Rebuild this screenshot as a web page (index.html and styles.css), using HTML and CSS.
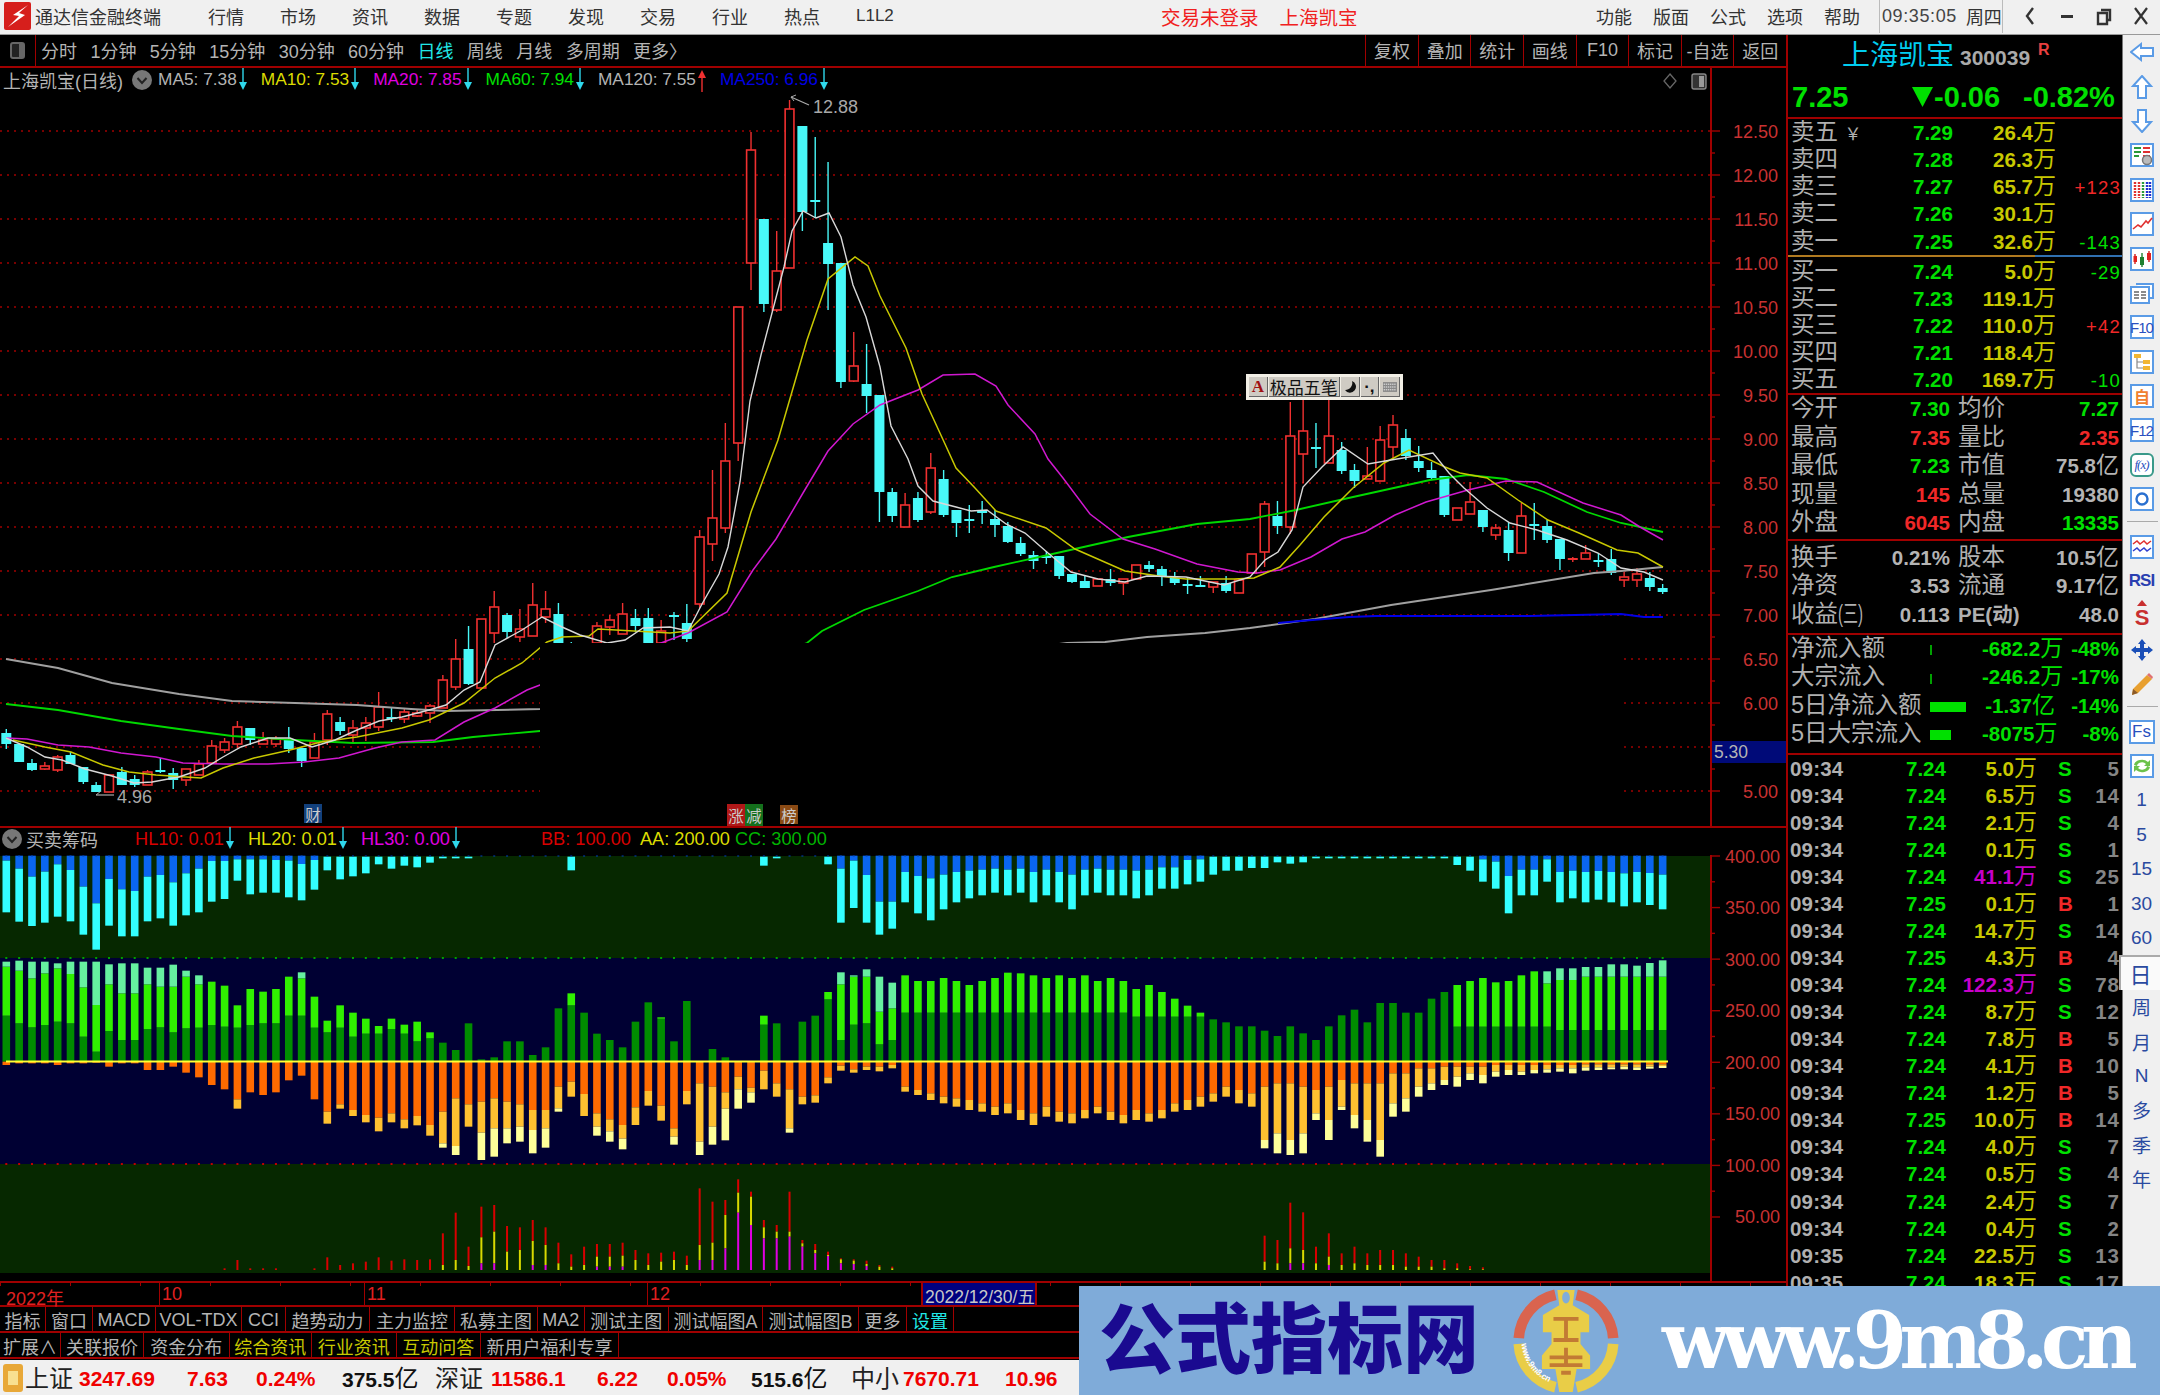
FILE: index.html
```html
<!DOCTYPE html>
<html lang="zh-CN">
<head>
    <meta charset="UTF-8">
    <title>通达信金融终端</title>
    <link rel="stylesheet" href="styles.css">
</head>
<body>
    <svg width="0" height="0" class="defs">
        <symbol id="arrow-down" viewBox="0 0 10 24"><path d="M5 0V16" stroke="#2fd8ec" stroke-width="1.4"/><path d="M1 14H9L5 22Z" fill="#2fd8ec"/></symbol>
        <symbol id="arrow-up" viewBox="0 0 10 24"><path d="M5 8V24" stroke="#f03030" stroke-width="1.4"/><path d="M1 10H9L5 2Z" fill="#f03030"/></symbol>
        <symbol id="fold" viewBox="0 0 20 20"><circle cx="10" cy="10" r="10" fill="#777"/><path d="M5.5 8L10 13L14.5 8" fill="none" stroke="#222" stroke-width="2"/></symbol>
    </svg>

    <header class="titlebar">
        <svg class="app-logo" viewBox="0 0 27 28"><rect width="27" height="28" rx="2" fill="#d61f1c"/><path d="M24 3L9 13L15 14L4 25L21 13L15 11Z" fill="#fff"/></svg>
        <span class="app-name">通达信金融终端</span>
        <nav class="menu">
            <span>行情</span><span>市场</span><span>资讯</span><span>数据</span><span>专题</span><span>发现</span><span>交易</span><span>行业</span><span>热点</span><span>L1L2</span>
        </nav>
        <div class="title-notice"><span>交易未登录</span><span>上海凯宝</span></div>
        <nav class="menu-right"><span>功能</span><span>版面</span><span>公式</span><span>选项</span><span>帮助</span></nav>
        <div class="clock"><span>09:35:05</span><span>周四</span></div>
        <div class="win-btns">
            <svg viewBox="0 0 16 22"><path d="M11 3L5 11L11 19" fill="none" stroke="#333" stroke-width="2.4"/></svg>
            <svg viewBox="0 0 16 22"><rect x="2" y="10" width="12" height="3" fill="#333"/></svg>
            <svg viewBox="0 0 16 22"><path d="M5 5H14V15H11M2 8H11V19H2Z" fill="none" stroke="#333" stroke-width="2.4"/></svg>
            <svg viewBox="0 0 16 22"><path d="M2 3L14 19M14 3L2 19" stroke="#333" stroke-width="2.2"/></svg>
        </div>
    </header>

    <div class="workspace">
        <main class="main">
            <div class="period-bar">
                <span class="panel-toggle"><i></i></span>
                <div class="periods">
                    <span>分时</span><span>1分钟</span><span>5分钟</span><span>15分钟</span><span>30分钟</span><span>60分钟</span><span class="on">日线</span><span>周线</span><span>月线</span><span>多周期</span><span>更多〉</span>
                </div>
                <div class="tools">
                    <span>复权</span><span>叠加</span><span>统计</span><span>画线</span><span>F10</span><span>标记</span><span>-自选</span><span>返回</span>
                </div>
            </div>

            <section class="price-pane">
                <svg id="price-chart" class="pane-svg" viewBox="0 68 1786 758"></svg>
                <div class="legend">
                    <span class="stock-title">上海凯宝(日线)</span>
                    <svg class="fold"><use href="#fold"/></svg>
                    <span class="ma c-gray">MA5: 7.38</span><svg class="arr"><use href="#arrow-down"/></svg>
                    <span class="ma c-yellow">MA10: 7.53</span><svg class="arr"><use href="#arrow-down"/></svg>
                    <span class="ma c-magenta">MA20: 7.85</span><svg class="arr"><use href="#arrow-down"/></svg>
                    <span class="ma c-green">MA60: 7.94</span><svg class="arr"><use href="#arrow-down"/></svg>
                    <span class="ma c-gray">MA120: 7.55</span><svg class="arr"><use href="#arrow-up"/></svg>
                    <span class="ma c-blue">MA250: 6.96</span><svg class="arr"><use href="#arrow-down"/></svg>
                </div>
                <svg class="pane-icons" viewBox="0 0 44 24"><path d="M7 5L13 12L7 19L1 12Z" fill="none" stroke="#666" stroke-width="1.3"/><rect x="29" y="5" width="14" height="15" rx="2" fill="#333" stroke="#888" stroke-width="1.4"/><rect x="36" y="7" width="5" height="11" fill="#999"/></svg>

                <div class="ime">
                    <b class="ime-a">A</b><span class="ime-name">极品五笔</span>
                    <span class="ime-key">
                        <svg viewBox="0 0 14 14"><path d="M9 1A6 6 0 1 1 2 10A7 7 0 0 0 9 1Z" fill="#111"/></svg>
                    </span>
                    <span class="ime-key ime-dot">·,</span>
                    <span class="ime-key">
                        <svg viewBox="0 0 20 14"><rect width="20" height="14" fill="#888"/><path d="M1 3H19M1 7H19M1 11H19" stroke="#eee" stroke-width="1.4" stroke-dasharray="2 1"/></svg>
                    </span>
                </div>

                <span class="pin pin-cai">财</span>
                <span class="pin pin-zhang"><i>涨</i><i>减</i></span>
                <span class="pin pin-bang">榜</span>
                <span class="cursor-price">5.30</span>
            </section>

            <div class="ind-head">
                <svg class="fold"><use href="#fold"/></svg>
                <span class="ind-name">买卖筹码</span>
                <span class="ma c-red">HL10: 0.01</span><svg class="arr"><use href="#arrow-down"/></svg>
                <span class="ma c-yellow">HL20: 0.01</span><svg class="arr"><use href="#arrow-down"/></svg>
                <span class="ma c-magenta">HL30: 0.00</span><svg class="arr"><use href="#arrow-down"/></svg>
                <span class="ma c-red bb">BB: 100.00</span>
                <span class="ma c-yellow aa">AA: 200.00</span>
                <span class="ma c-green2">CC: 300.00</span>
            </div>

            <section class="ind-pane">
                <svg id="ind-chart" class="pane-svg" viewBox="0 855 1786 426"></svg>
            </section>

            <div class="date-axis">
                <span class="month m-year">2022年</span>
                <span class="month m-oct">10</span>
                <span class="month m-nov">11</span>
                <span class="month m-dec">12</span>
                <span class="date-box">2022/12/30/五</span>
            </div>
            <div class="tabs tabs-a">
                <span>指标</span><span>窗口</span><span>MACD</span><span>VOL-TDX</span><span>CCI</span><span>趋势动力</span><span>主力监控</span><span>私募主图</span><span>MA2</span><span>测试主图</span><span>测试幅图A</span><span>测试幅图B</span><span>更多</span><span class="t-cyan">设置</span>
            </div>
            <div class="tabs tabs-b">
                <span>扩展∧</span><span>关联报价</span><span>资金分布</span><span class="t-yellow">综合资讯</span><span class="t-yellow">行业资讯</span><span class="t-yellow">互动问答</span><span>新用户福利专享</span>
            </div>
        </main>

        <aside class="quote">
            <div class="q-name">
                <span class="q-title">上海凯宝</span><span class="q-code">300039</span><sup class="q-r">R</sup>
            </div>
            <div class="q-price">
                <span class="q-last">7.25</span>
                <span class="q-chg"><svg viewBox="0 0 21 20"><path d="M0 0H21L10.5 20Z" fill="#00e000"/></svg>-0.06</span>
                <span class="q-pct">-0.82%</span>
            </div>

            <div class="book sec asks">
                <div class="book-row"><span class="lab">卖五 <i class="yen">￥</i></span><b class="g">7.29</b><b class="vol">26.4<i>万</i></b><span class="dl"></span></div>
                <div class="book-row"><span class="lab">卖四</span><b class="g">7.28</b><b class="vol">26.3<i>万</i></b><span class="dl"></span></div>
                <div class="book-row"><span class="lab">卖三</span><b class="g">7.27</b><b class="vol">65.7<i>万</i></b><span class="dl r">+123</span></div>
                <div class="book-row"><span class="lab">卖二</span><b class="g">7.26</b><b class="vol">30.1<i>万</i></b><span class="dl"></span></div>
                <div class="book-row"><span class="lab">卖一</span><b class="g">7.25</b><b class="vol">32.6<i>万</i></b><span class="dl g">-143</span></div>
            </div>
            <div class="book sec bids">
                <div class="book-row"><span class="lab">买一</span><b class="g">7.24</b><b class="vol">5.0<i>万</i></b><span class="dl g">-29</span></div>
                <div class="book-row"><span class="lab">买二</span><b class="g">7.23</b><b class="vol">119.1<i>万</i></b><span class="dl"></span></div>
                <div class="book-row"><span class="lab">买三</span><b class="g">7.22</b><b class="vol">110.0<i>万</i></b><span class="dl r">+42</span></div>
                <div class="book-row"><span class="lab">买四</span><b class="g">7.21</b><b class="vol">118.4<i>万</i></b><span class="dl"></span></div>
                <div class="book-row"><span class="lab">买五</span><b class="g">7.20</b><b class="vol">169.7<i>万</i></b><span class="dl g">-10</span></div>
            </div>

            <div class="stats sec">
                <div class="stat-row"><span class="lab">今开</span><b class="g">7.30</b><span class="lab">均价</span><b class="g">7.27</b></div>
                <div class="stat-row"><span class="lab">最高</span><b class="r">7.35</b><span class="lab">量比</span><b class="r">2.35</b></div>
                <div class="stat-row"><span class="lab">最低</span><b class="g">7.23</b><span class="lab">市值</span><b class="w">75.8<i>亿</i></b></div>
                <div class="stat-row"><span class="lab">现量</span><b class="r">145</b><span class="lab">总量</span><b class="w">19380</b></div>
                <div class="stat-row"><span class="lab">外盘</span><b class="r">6045</b><span class="lab">内盘</span><b class="g">13335</b></div>
            </div>
            <div class="stats sec stats-b">
                <div class="stat-row"><span class="lab">换手</span><b class="w">0.21%</b><span class="lab">股本</span><b class="w">10.5<i>亿</i></b></div>
                <div class="stat-row"><span class="lab">净资</span><b class="w">3.53</b><span class="lab">流通</span><b class="w">9.17<i>亿</i></b></div>
                <div class="stat-row"><span class="lab lab-q">收益<i>(三)</i></span><b class="w">0.113</b><span class="lab pe">PE(动)</span><b class="w">48.0</b></div>
            </div>

            <div class="flows sec">
                <div class="flow-row"><span class="lab">净流入额</span><span class="bar bar-tiny"></span><b class="g">-682.2<i>万</i></b><b class="g">-48%</b></div>
                <div class="flow-row"><span class="lab">大宗流入</span><span class="bar bar-tiny"></span><b class="g">-246.2<i>万</i></b><b class="g">-17%</b></div>
                <div class="flow-row"><span class="lab">5日净流入额</span><span class="bar bar-long"></span><b class="g">-1.37<i>亿</i></b><b class="g">-14%</b></div>
                <div class="flow-row"><span class="lab">5日大宗流入</span><span class="bar bar-mid"></span><b class="g">-8075<i>万</i></b><b class="g">-8%</b></div>
            </div>

            <div class="ticks">
                <div class="tick"><b class="t">09:34</b><b class="g">7.24</b><b class="vol">5.0<i>万</i></b><b class="g">S</b><b class="n">5</b></div>
                <div class="tick"><b class="t">09:34</b><b class="g">7.24</b><b class="vol">6.5<i>万</i></b><b class="g">S</b><b class="n">14</b></div>
                <div class="tick"><b class="t">09:34</b><b class="g">7.24</b><b class="vol">2.1<i>万</i></b><b class="g">S</b><b class="n">4</b></div>
                <div class="tick"><b class="t">09:34</b><b class="g">7.24</b><b class="vol">0.1<i>万</i></b><b class="g">S</b><b class="n">1</b></div>
                <div class="tick"><b class="t">09:34</b><b class="g">7.24</b><b class="vol big">41.1<i>万</i></b><b class="g">S</b><b class="n">25</b></div>
                <div class="tick"><b class="t">09:34</b><b class="g">7.25</b><b class="vol">0.1<i>万</i></b><b class="r">B</b><b class="n">1</b></div>
                <div class="tick"><b class="t">09:34</b><b class="g">7.24</b><b class="vol">14.7<i>万</i></b><b class="g">S</b><b class="n">14</b></div>
                <div class="tick"><b class="t">09:34</b><b class="g">7.25</b><b class="vol">4.3<i>万</i></b><b class="r">B</b><b class="n">4</b></div>
                <div class="tick"><b class="t">09:34</b><b class="g">7.24</b><b class="vol big">122.3<i>万</i></b><b class="g">S</b><b class="n">78</b></div>
                <div class="tick"><b class="t">09:34</b><b class="g">7.24</b><b class="vol">8.7<i>万</i></b><b class="g">S</b><b class="n">12</b></div>
                <div class="tick"><b class="t">09:34</b><b class="g">7.24</b><b class="vol">7.8<i>万</i></b><b class="r">B</b><b class="n">5</b></div>
                <div class="tick"><b class="t">09:34</b><b class="g">7.24</b><b class="vol">4.1<i>万</i></b><b class="r">B</b><b class="n">10</b></div>
                <div class="tick"><b class="t">09:34</b><b class="g">7.24</b><b class="vol">1.2<i>万</i></b><b class="r">B</b><b class="n">5</b></div>
                <div class="tick"><b class="t">09:34</b><b class="g">7.25</b><b class="vol">10.0<i>万</i></b><b class="r">B</b><b class="n">14</b></div>
                <div class="tick"><b class="t">09:34</b><b class="g">7.24</b><b class="vol">4.0<i>万</i></b><b class="g">S</b><b class="n">7</b></div>
                <div class="tick"><b class="t">09:34</b><b class="g">7.24</b><b class="vol">0.5<i>万</i></b><b class="g">S</b><b class="n">4</b></div>
                <div class="tick"><b class="t">09:34</b><b class="g">7.24</b><b class="vol">2.4<i>万</i></b><b class="g">S</b><b class="n">7</b></div>
                <div class="tick"><b class="t">09:34</b><b class="g">7.24</b><b class="vol">0.4<i>万</i></b><b class="g">S</b><b class="n">2</b></div>
                <div class="tick"><b class="t">09:35</b><b class="g">7.24</b><b class="vol">22.5<i>万</i></b><b class="g">S</b><b class="n">13</b></div>
                <div class="tick"><b class="t">09:35</b><b class="g">7.24</b><b class="vol">18.3<i>万</i></b><b class="g">S</b><b class="n">17</b></div>
            </div>
        </aside>

        <aside class="sidebar">
            <div class="side-btn"><svg viewBox="0 0 24 24"><path d="M1 12L11 4V8H23V16H11V20Z" fill="#fff" stroke="#5a9be6" stroke-width="2"/></svg></div>
            <div class="side-btn"><svg viewBox="0 0 24 24"><path d="M12 1L21 11H16V23H8V11H3Z" fill="#fff" stroke="#5a9be6" stroke-width="2"/></svg></div>
            <div class="side-btn"><svg viewBox="0 0 24 24"><path d="M12 23L21 13H16V1H8V13H3Z" fill="#fff" stroke="#5a9be6" stroke-width="2"/></svg></div>
            <div class="side-btn"><svg viewBox="0 0 24 24"><rect x="1" y="1" width="22" height="22" fill="#fff" stroke="#5a9be6" stroke-width="2"/><path d="M4 5H11M4 9H11M4 13H9" stroke="#2a9a3a" stroke-width="2"/><path d="M13 5H20M13 9H20M13 13H20" stroke="#e03030" stroke-width="2"/><circle cx="17" cy="17" r="4.5" fill="#bbb" stroke="#777" stroke-width="1.5"/></svg></div>
            <div class="side-btn"><svg viewBox="0 0 24 24"><rect x="1" y="1" width="22" height="22" fill="#fff" stroke="#5a9be6" stroke-width="2"/><path d="M5 4V20M9 4V20" stroke="#e03030" stroke-width="2.4" stroke-dasharray="2 1"/><path d="M13 4V20" stroke="#2a9a3a" stroke-width="2.4" stroke-dasharray="2 1"/><path d="M17 4V20M20 4V20" stroke="#2030d0" stroke-width="2.4" stroke-dasharray="2 1"/></svg></div>
            <div class="side-btn"><svg viewBox="0 0 24 24"><rect x="1" y="1" width="22" height="22" fill="#fff" stroke="#5a9be6" stroke-width="2"/><path d="M3 17L8 13L11 15L16 9L18 11L22 6" fill="none" stroke="#e03030" stroke-width="1.6"/></svg></div>
            <div class="side-btn"><svg viewBox="0 0 24 24"><rect x="1" y="1" width="22" height="22" fill="#fff" stroke="#5a9be6" stroke-width="2"/><path d="M5 7V17M19 4V15" stroke="#d02020" stroke-width="1.4"/><path d="M12 6V20" stroke="#208030" stroke-width="1.4"/><rect x="3.5" y="9" width="3.5" height="6" fill="#e02020"/><rect x="10" y="10" width="4" height="8" fill="#208030"/><rect x="17" y="6" width="4" height="7" fill="#e02020"/></svg></div>
            <div class="side-btn"><svg viewBox="0 0 24 24"><path d="M6 3H23V17H19" fill="#fff" stroke="#5a9be6" stroke-width="2"/><rect x="1" y="6" width="18" height="16" fill="#fff" stroke="#5a9be6" stroke-width="2"/><path d="M4 11H9M11 11H16M4 14H9M11 14H16M4 17H9M11 17H16" stroke="#666" stroke-width="1.4"/></svg></div>
            <div class="side-btn"><span class="box-txt">F10</span></div>
            <div class="side-btn"><svg viewBox="0 0 24 24"><rect x="1" y="1" width="22" height="22" fill="#fff" stroke="#5a9be6" stroke-width="2"/><path d="M7 7V18H13M7 12H13" fill="none" stroke="#888" stroke-width="1.2"/><rect x="4" y="4" width="7" height="4" fill="#f2b632"/><rect x="13" y="10" width="7" height="4" fill="#f2b632"/><rect x="13" y="16" width="7" height="4" fill="#f2b632"/></svg></div>
            <div class="side-btn"><span class="box-txt box-zi">自</span></div>
            <div class="side-btn"><span class="box-txt">F12</span></div>
            <div class="side-btn"><span class="box-txt box-fx">f(x)</span></div>
            <div class="side-btn"><svg viewBox="0 0 24 24"><rect x="1" y="1" width="22" height="22" fill="#fff" stroke="#5a9be6" stroke-width="2"/><circle cx="12" cy="12" r="5.5" fill="none" stroke="#2a70d0" stroke-width="2.4"/></svg></div>
            <div class="side-sep sep-a"></div>
            <div class="side-btn"><svg viewBox="0 0 24 24"><rect x="1" y="1" width="22" height="22" fill="#fff" stroke="#5a9be6" stroke-width="2"/><path d="M3 9L7 6L10 9L14 6L17 9L21 6" fill="none" stroke="#e03030" stroke-width="1.5"/><path d="M3 16L7 13L10 16L14 13L17 16L21 13" fill="none" stroke="#3040d0" stroke-width="1.5"/></svg></div>
            <div class="side-btn"><span class="rsi">RSI</span></div>
            <div class="side-btn"><svg class="dollar-ico" viewBox="0 0 24 30"><path d="M12 0L17 6H7Z" fill="#c83030"/><text x="12" y="25" class="dollar">S</text></svg></div>
            <div class="side-btn"><svg viewBox="0 0 24 24"><path d="M12 1L16 6H14V10H18V8L23 12L18 16V14H14V18H16L12 23L8 18H10V14H6V16L1 12L6 8V10H10V6H8Z" fill="#1a4fb8"/></svg></div>
            <div class="side-btn"><svg viewBox="0 0 24 24"><path d="M3 17L17 3L22 7L8 21L2 23Z" fill="#e8a030"/><path d="M17 3L19 1L23 5L22 7Z" fill="#e07070"/><path d="M3 17L8 21L2 23Z" fill="#8a5a2a"/></svg></div>
            <div class="side-sep sep-b"></div>
            <div class="side-btn"><span class="box-txt box-fs">Fs</span></div>
            <div class="side-btn"><svg viewBox="0 0 24 24"><rect x="1" y="1" width="22" height="22" fill="#fff" stroke="#5a9be6" stroke-width="2"/><path d="M4 11A8 6 0 0 1 18 8L20 6V12H14L16 10A5 4 0 0 0 7 12Z" fill="#6cc24a"/><path d="M20 13A8 6 0 0 1 6 16L4 18V12H10L8 14A5 4 0 0 0 17 12Z" fill="#6cc24a"/></svg></div>
            <div class="side-btn period">1</div>
            <div class="side-btn period">5</div>
            <div class="side-btn period">15</div>
            <div class="side-btn period">30</div>
            <div class="side-btn period">60</div>
            <div class="side-btn period period-on">日</div>
            <div class="side-btn period">周</div>
            <div class="side-btn period">月</div>
            <div class="side-btn period">N</div>
            <div class="side-btn period">多</div>
            <div class="side-btn period">季</div>
            <div class="side-btn period">年</div>
        </aside>
    </div>

    <footer class="statusbar">
        <svg class="st-icon" viewBox="0 0 20 28"><rect width="20" height="28" rx="3" fill="#e8a838"/><rect x="5" y="7" width="10" height="14" fill="#f8e090"/></svg>
        <span class="st-name n1">上证</span><b class="sv a">3247.69</b><b class="sv b">7.63</b><b class="sv c">0.24%</b><b class="sv d">375.5<i>亿</i></b>
        <span class="st-name n2">深证</span><b class="sv a2">11586.1</b><b class="sv b">6.22</b><b class="sv c">0.05%</b><b class="sv d">515.6<i>亿</i></b>
        <span class="st-name n3">中小</span><b class="sv a3">7670.71</b><b class="sv b3">10.96</b>
    </footer>

    <div class="banner">
        <span class="banner-cn">公式指标网</span>
        <svg class="banner-logo" viewBox="0 0 110 110">
            <path d="M6 52A49 49 0 0 1 44 7" fill="none" stroke="#d9644f" stroke-width="11"/>
            <path d="M66 7A49 49 0 0 1 104 52" fill="none" stroke="#d9644f" stroke-width="11"/>
            <path d="M104 58A49 49 0 0 1 66 103" fill="none" stroke="#e9cd47" stroke-width="11"/>
            <path d="M6 58A49 49 0 0 0 44 103" fill="none" stroke="#e9cd47" stroke-width="11"/>
            <path d="M46 2H64L62 18L79 28V46H70V58L80 70V84H66L62 108H48L44 84H30V70L40 58V46H31V28L48 18Z" fill="#e9cd47"/>
            <ellipse cx="55" cy="10" rx="4" ry="6" fill="#80acd8"/>
            <path d="M42 32H68M55 32V54M42 54H68M38 72H72M38 80H72M55 62V80M50 88H60" stroke="#c27a34" stroke-width="4" fill="none"/>
            <path id="wm-arc" d="M9 58A46 46 0 0 0 46 100" fill="none"/>
            <text class="banner-mini"><textPath href="#wm-arc">www.9m8.cn</textPath></text>
        </svg>
        <span class="banner-url">www.9m8.cn</span>
    </div>

    <script src="charts.js"></script>
</body>
</html>
```

FILE: styles.css
```css
* {
    box-sizing: border-box;
}
html, body {
    margin: 0;
    padding: 0;
}
body {
    position: relative;
    width: 2160px;
    height: 1395px;
    overflow: hidden;
    background: #000;
    color: #b4b4b4;
    font-family: "Liberation Sans", "Noto Sans CJK SC", sans-serif;
    font-size: 18px;
}
i {
    font-style: normal;
}
.defs {
    position: absolute;
}

/* title bar */
.titlebar {
    display: flex;
    align-items: center;
    height: 35px;
    padding-bottom: 2px;
    background: #f0f0f0;
    border-bottom: 1px solid #999;
    color: #333;
}
.app-logo {
    width: 27px;
    height: 28px;
    margin-left: 4px;
}
.app-name {
    margin-left: 4px;
    width: 173px;
}
.menu {
    display: flex;
    align-items: center;
    gap: 36px;
    width: 953px;
}
.menu span:last-child {
    font-size: 17px;
}
.title-notice {
    display: flex;
    gap: 21px;
    width: 435px;
    color: #f02020;
    font-size: 19.5px;
}
.menu-right {
    display: flex;
    gap: 21px;
    width: 283px;
}
.clock {
    display: flex;
    align-items: center;
    gap: 9px;
    width: 124px;
    height: 33px;
    padding-left: 2px;
    border-left: 1px solid #bbb;
    border-right: 1px solid #bbb;
    font-size: 18px;
}
.clock span:first-child {
    letter-spacing: 0.6px;
    color: #444;
}
.win-btns {
    display: flex;
    gap: 21px;
    margin-left: 19px;
}
.win-btns svg {
    width: 16px;
    height: 22px;
}

/* main layout */
.workspace {
    display: flex;
    height: 1325px;
}
.main {
    width: 1786px;
    flex: none;
}

/* period buttons row */
.period-bar {
    display: flex;
    align-items: center;
    height: 33px;
    padding-bottom: 1px;
    border-bottom: 2px solid #a00000;
}
.panel-toggle {
    display: flex;
    align-items: center;
    justify-content: center;
    width: 36px;
    height: 31px;
    border-right: 1px solid #a00000;
}
.panel-toggle i {
    width: 15px;
    height: 17px;
    background: #222;
    border: 2px solid #666;
    border-right-width: 6px;
    border-radius: 3px;
}
.periods {
    display: flex;
    gap: 13.4px;
    padding-left: 5px;
    flex: 1;
}
.periods .on {
    color: #20e8e8;
}
.tools {
    display: flex;
    height: 31px;
}
.tools span {
    display: flex;
    align-items: center;
    justify-content: center;
    width: 52.6px;
    border-left: 1px solid #a00000;
}

/* price chart */
.price-pane {
    position: relative;
    height: 758px;
}
.pane-svg {
    display: block;
    width: 100%;
    height: 100%;
    overflow: visible;
}
.pane-svg text {
    font-family: "Liberation Sans", sans-serif;
    font-size: 18px;
}
.pane-svg .axis {
    fill: #c83232;
    text-anchor: end;
}
.pane-svg .mark {
    fill: #a8a8a8;
}
.legend {
    position: absolute;
    left: 3px;
    top: 0;
    display: flex;
    align-items: center;
    height: 23px;
}
.stock-title {
    width: 129px;
}
.fold {
    width: 20px;
    height: 20px;
}
.legend .fold {
    margin-right: 6px;
}
.ma {
    font-size: 17.3px;
    white-space: nowrap;
}
.arr {
    width: 10px;
    height: 24px;
    margin: 0 13px 0 1px;
}
.c-gray { color: #b4b4b4; }
.c-yellow { color: #dcdc00; }
.c-magenta { color: #e000e0; }
.c-green { color: #00e000; }
.c-green2 { color: #00b400; }
.c-blue { color: #0000e6; }
.c-red { color: #d80000; }
.pane-icons {
    position: absolute;
    right: 79px;
    top: 1px;
    width: 44px;
    height: 24px;
}
.ime {
    position: absolute;
    left: 1246px;
    top: 306px;
    display: flex;
    align-items: stretch;
    width: 157px;
    height: 26px;
    padding: 3px;
    gap: 1px;
    background: #f2efe6;
    color: #111;
    font-size: 17px;
}
.ime > * {
    display: flex;
    align-items: center;
    justify-content: center;
    background: #cfcbc3;
    border-right: 1px solid #666;
    border-bottom: 1px solid #666;
}
.ime-a {
    width: 19px;
    color: #a01010;
    font-family: "Liberation Serif", serif;
}
.ime-name {
    width: 72px;
}
.ime-key {
    width: 19px;
}
.ime-key svg {
    width: 14px;
    height: 14px;
}
.ime-key:last-child {
    width: 20px;
}
.ime-dot {
    font-weight: bold;
}
.pin {
    position: absolute;
    display: flex;
    align-items: center;
    justify-content: center;
    height: 19px;
    font-size: 15.5px;
    color: #ccc;
}
.pin-cai {
    left: 304px;
    top: 736px;
    width: 18px;
    background: #12407c;
}
.pin-zhang {
    left: 727px;
    top: 737px;
    width: 36px;
}
.pin-zhang i {
    width: 18px;
    text-align: center;
    background: #b01818;
}
.pin-zhang i + i {
    background: #14701c;
}
.pin-bang {
    left: 780px;
    top: 737px;
    width: 18px;
    background: #8a4a14;
}
.cursor-price {
    position: absolute;
    left: 1712px;
    top: 673px;
    width: 74px;
    height: 22px;
    padding-left: 2px;
    background: #000a78;
    line-height: 22px;
    font-size: 17.5px;
}

/* indicator */
.ind-head {
    display: flex;
    align-items: center;
    height: 29px;
    border-top: 2px solid #a00000;
    padding: 0 0 5px 2px;
}
.ind-head .ma {
    font-size: 18.2px;
}
.ind-name {
    width: 113px;
    padding-left: 4px;
}
.bb {
    margin-left: 67px;
    margin-right: 9px;
}
.aa {
    margin-right: 5px;
}
.ind-pane {
    height: 426px;
}

/* time axis */
.date-axis {
    position: relative;
    display: flex;
    height: 26px;
    border-top: 2px solid #a00000;
    border-bottom: 2px solid #a00000;
    color: #e02020;
    background-image: repeating-linear-gradient(90deg, #a00000 0 1px, transparent 1px 70px);
    background-size: 100% 3px;
    background-repeat: no-repeat;
}
.month {
    padding-left: 2px;
    padding-top: 1px;
    border-right: 1px solid #a00000;
}
.m-year { width: 160px; padding-left: 6px; }
.m-oct { width: 205px; }
.m-nov { width: 283px; }
.m-dec { width: 273px; border-right: none; }
.date-box {
    width: 116px;
    padding: 0 2px;
    background: #000080;
    border-left: 2px solid #a00000;
    border-right: 2px solid #a00000;
    color: #c8c8c8;
    font-size: 17.5px;
    white-space: nowrap;
}

/* bottom tabs */
.tabs {
    display: grid;
    height: 26px;
    border-bottom: 2px solid #a00000;
}
.tabs span {
    display: flex;
    align-items: center;
    justify-content: center;
    border-right: 1px solid #a00000;
    white-space: nowrap;
}
.tabs-a {
    grid-template-columns: 46px 47px 63px 86px 44px 84px 85px 83px 46.6px 84.4px 94px 96px 48px 47px;
}
.tabs-b {
    grid-template-columns: 61px 83px 85.5px 82.5px 84.5px 84.5px 138px;
}
.t-cyan { color: #20e8e8; }
.t-yellow { color: #c8c800; }

/* quote column */
.quote {
    width: 337px;
    flex: none;
    overflow: hidden;
    border-left: 2px solid #a00000;
    border-right: 1px solid #777;
}
.q-name {
    display: flex;
    align-items: baseline;
    height: 43px;
    padding: 3px 0 0 54px;
}
.q-title {
    color: #00cdf0;
    font-size: 28px;
    line-height: 36px;
}
.q-code {
    margin-left: 6px;
    font-size: 21px;
    font-weight: bold;
    color: #aaa;
}
.q-r {
    align-self: flex-start;
    margin-top: 6px;
    margin-left: 8px;
    font-size: 16px;
    font-weight: bold;
    color: #e84040;
    line-height: 12px;
}
.q-price {
    display: grid;
    grid-template-columns: 120px 111px auto;
    height: 41px;
    padding-left: 4px;
    border-bottom: 2px solid #a00000;
    color: #00e000;
    font-size: 29px;
    font-weight: bold;
    line-height: 38px;
}
.q-chg svg {
    width: 21px;
    height: 20px;
    margin-right: 1px;
}
.sec {
    border-bottom: 2px solid #a00000;
}
.lab {
    color: #b0b0b0;
    font-size: 23.5px;
    white-space: nowrap;
}
.yen {
    font-size: 17px;
}
.g { color: #00e000; }
.r { color: #f02828; }
.w { color: #b4b4b4; }
.book {
    font-size: 20.5px;
}
.asks {
    border-bottom: 2px solid;
    border-image: linear-gradient(90deg, #b07a20 247px, #3070b0 247px) 1;
}
.bids {
    padding-top: 1px;
}
.book-row, .stat-row, .flow-row, .tick {
    display: grid;
    align-items: baseline;
    line-height: 1;
    padding: 2px 0 0 3px;
}
.book-row {
    grid-template-columns: 122px 50px 93px 65px;
    height: 27.15px;
}
.vol i, .stats i, .flows i {
    font-weight: normal;
    font-size: 23px;
}
.vol {
    color: #c8c800;
    text-align: right;
    white-space: nowrap;
}
.big {
    color: #c800c8;
}
.dl {
    text-align: right;
    font-size: 18.5px;
    letter-spacing: 1.2px;
}
.stats {
    padding-bottom: 2px;
    font-size: 20.5px;
}
.stats-b {
    padding-top: 2.5px;
    padding-bottom: 4px;
}
.stat-row {
    grid-template-columns: 62px 97px 58px 111px;
    height: 28.4px;
}
.stat-row b {
    text-align: right;
    white-space: nowrap;
}
.stat-row .lab:nth-child(3) {
    padding-left: 8px;
}
.stat-row .pe {
    font-size: 20.5px;
    font-weight: bold;
}
.lab-q i {
    display: inline-block;
    width: 25px;
    font-size: 23.5px;
    transform: scaleX(0.64);
    transform-origin: left;
}
.flows {
    height: 120px;
    font-size: 20.5px;
}
.flow-row {
    grid-template-columns: 139px 52px 73px 64px;
    height: 28.4px;
}
.flow-row b {
    text-align: right;
    white-space: nowrap;
}
.bar {
    height: 10px;
    align-self: center;
    background: #00e000;
}
.bar-tiny {
    width: 2px;
    background: #00a000;
}
.bar-long {
    width: 36px;
}
.bar-mid {
    width: 21px;
}
.tick {
    grid-template-columns: 116px 50px 81px 46px 37px;
    height: 27.07px;
    padding: 1.5px 0 0 2px;
    font-size: 20.5px;
}
.tick > :nth-child(4) {
    padding-left: 21px;
}
.tick .n {
    text-align: right;
    color: #858585;
    letter-spacing: 1px;
}
.tick .t {
    color: #b0b0b0;
    letter-spacing: 0.2px;
}

/* toolbar on the right edge */
.sidebar {
    width: 37px;
    flex: none;
    background: #f0f0f0;
}
.side-btn {
    display: flex;
    align-items: center;
    justify-content: center;
    height: 34.4px;
}
.side-btn svg {
    width: 24px;
    height: 24px;
}
.side-btn .dollar-ico {
    height: 30px;
}
.side-sep {
    height: 13px;
    position: relative;
}
.side-sep::after {
    content: "";
    position: absolute;
    left: 4px;
    right: 2px;
    top: 5px;
    height: 1px;
    background: #aaa;
}
.box-txt {
    display: flex;
    align-items: center;
    justify-content: center;
    width: 24px;
    height: 24px;
    background: #fff;
    border: 2px solid #5a9be6;
    color: #2a50c0;
    font-size: 15px;
    letter-spacing: -1px;
}
.box-zi {
    color: #f08030;
    font-weight: bold;
    font-size: 16px;
}
.box-fx {
    border-color: #3a9a8a;
    border-radius: 6px;
    font-family: "Liberation Serif", serif;
    font-style: italic;
    font-size: 13px;
}
.box-fs {
    width: 26px;
    font-size: 17px;
    letter-spacing: 0;
}
.rsi {
    color: #2a3fb0;
    font-weight: bold;
    font-size: 17px;
    letter-spacing: -1px;
}
.dollar {
    fill: #c83030;
    font-family: "Liberation Sans", sans-serif;
    font-weight: bold;
    font-size: 22px;
    text-anchor: middle;
}
.period {
    color: #2a4aa0;
    font-size: 19px;
}
.period-on {
    margin-left: -4px;
    background: #fafafa;
    border-top: 2px solid #aaa;
    border-left: 2px solid #aaa;
    font-size: 22px;
}

/* index strip */
.statusbar {
    position: relative;
    height: 35px;
    background: #f0f0f0;
    color: #111;
}
.st-icon {
    position: absolute;
    left: 3px;
    top: 4px;
    width: 20px;
    height: 28px;
}
.st-name {
    position: absolute;
    top: 1px;
    font-size: 24px;
    line-height: 35px;
    color: #222;
}
.n1 { left: 25px; }
.n2 { left: 435px; }
.n3 { left: 851px; }
.sv {
    position: absolute;
    top: 1px;
    line-height: 36px;
    font-size: 21px;
    color: #f00000;
    white-space: nowrap;
}
.sv.a { left: 79px; }
.sv.a2 { left: 491px; }
.sv.a3 { left: 903px; }
.sv.b3 { left: 1005px; }
.n1 ~ .b { left: 187px; }
.n1 ~ .c { left: 256px; }
.n1 ~ .d { left: 342px; }
.n2 ~ .b { left: 597px; }
.n2 ~ .c { left: 667px; }
.n2 ~ .d { left: 751px; }
.sv.d {
    color: #111;
}
.sv.d i {
    font-weight: normal;
    font-size: 24px;
}

/* site banner over the bottom right corner */
.banner {
    position: absolute;
    left: 1079px;
    top: 1286px;
    display: flex;
    align-items: center;
    width: 1081px;
    height: 109px;
    background: #7fabd9;
}
.banner-cn {
    margin-left: 20px;
    width: 388px;
    color: #1a0a90;
    font-size: 76px;
    font-weight: 900;
    line-height: 100px;
    white-space: nowrap;
}
.banner-logo {
    width: 106px;
    height: 106px;
    margin-left: 26px;
}
.banner-mini {
    font-size: 8.5px;
    fill: #fff;
    font-weight: bold;
}
.banner-url {
    margin-left: 43px;
    color: #fff;
    font-family: "DejaVu Serif", serif;
    font-weight: bold;
    font-size: 78px;
    letter-spacing: -7.5px;
    line-height: 100px;
    white-space: nowrap;
}
```

FILE: charts.js
```js
// candles: top, bottom, wick top, wick bottom (screen y), 1 = up day
const candles = [
  [733,744,729,749,0],[744,762,744,762,0],[763,770,759,771,0],[766,769,762,770,1],[757,770,755,772,1],
  [755,764,752,764,0],[767,782,767,784,0],[785,792,782,792,0],[775,792,775,792,1],[772,785,767,785,0],
  [779,785,775,787,0],[772,785,770,785,1],[771,772,758,773,0],[773,780,768,789,0],[769,780,769,786,1],
  [764,775,760,775,1],[746,763,740,763,1],[742,750,738,753,1],[727,744,721,748,1],[728,740,728,745,0],
  [740,744,732,744,1],[739,744,736,747,1],[740,749,727,753,0],[748,761,748,767,0],[742,758,733,758,1],
  [714,740,710,745,1],[722,731,717,735,0],[728,735,720,742,1],[723,728,717,741,1],[707,727,692,731,1],
  [718,719,707,722,0],[712,719,708,723,1],[713,716,709,717,1],[706,713,704,723,1],[680,708,675,708,1],
  [659,687,639,690,1],[649,684,626,685,0],[619,688,619,688,1],[607,633,591,643,1],[615,632,613,638,0],
  [629,637,609,642,1],[605,636,583,636,1],[609,617,591,623,1],[614,648,603,648,0],[645,655,642,660,0],
  [650,660,645,665,1],[626,643,622,650,1],[620,627,615,635,1],[614,634,603,634,1],[618,626,609,632,0],
  [618,643,608,650,0],[631,643,620,650,1],[616,617,612,640,0],[623,639,604,642,0],[537,604,530,608,1],
  [518,544,470,561,1],[461,528,423,533,1],[307,443,307,461,1],[150,263,132,290,1],[219,304,219,312,0],
  [271,310,231,312,1],[109,268,100,268,1],[126,212,126,231,0],[201,202,137,218,0],[243,264,162,310,0],
  [263,382,263,388,0],[366,381,332,382,1],[384,396,344,413,0],[395,492,395,522,0],[492,516,488,522,0],
  [505,527,493,527,1],[498,520,492,522,0],[468,512,453,514,1],[479,515,470,517,0],[510,523,510,537,0],
  [520,521,505,533,0],[512,513,501,524,0],[519,525,510,537,0],[526,542,522,543,0],[543,554,537,556,0],
  [555,561,551,569,0],[557,558,551,564,0],[556,576,556,579,0],[574,582,574,583,0],[581,588,576,588,0],
  [579,586,579,586,1],[579,583,569,586,0],[579,583,579,595,1],[565,579,565,579,1],[565,569,561,572,0],
  [569,577,566,586,0],[578,583,572,585,0],[584,586,578,594,0],[586,587,576,587,0],[582,587,582,593,1],
  [583,591,576,593,0],[580,593,580,593,1],[554,573,554,573,1],[504,552,501,567,1],[516,526,501,534,0],
  [436,527,402,534,1],[431,454,400,483,1],[448,449,423,468,0],[436,463,400,463,1],[450,471,442,474,0],
  [470,481,464,488,0],[476,479,447,479,1],[440,481,426,481,1],[425,447,415,460,1],[438,456,429,460,0],
  [461,468,446,472,0],[470,478,462,480,0],[476,515,476,517,0],[508,520,508,520,1],[502,514,482,514,1],
  [510,527,510,532,0],[528,535,524,540,1],[530,553,522,561,0],[516,553,503,553,1],[525,526,503,540,0],
  [526,540,520,543,0],[539,559,539,570,0],[559,560,557,562,1],[553,559,545,559,1],[561,562,553,567,0],
  [559,573,549,575,0],[577,580,572,587,1],[574,580,568,587,1],[578,587,572,591,0],[588,592,584,594,0],
];

const maLines = [
  ['#a0a0a0', 2, '6,659 58,668 112,683 179,694 232,701 295,703 357,705 411,709 446,711 540,709 1067,643 1105,642 1147,637 1205,633 1250,628 1315,619 1391,605 1491,590 1594,573 1621,571 1663,567'],
  ['#0000e6', 2, '1278,623 1300,621 1349,617 1376,616 1529,616 1621,614 1644,617 1663,617'],
  ['#00d800', 1.8, '6,704 58,710 121,721 179,729 232,736 295,740 353,743 433,742 473,737 540,731 807,643 822,631 864,610 918,591 952,577 994,567 1048,555 1128,537 1197,524 1250,519 1296,510 1353,497 1430,480 1468,475 1506,479 1544,492 1587,512 1621,523 1663,532'],
  ['#d018d0', 1.5, '6,738 27,739 58,745 89,747 121,753 156,757 183,763 223,764 268,764 304,762 339,758 375,748 402,742 435,740 464,722 495,708 527,690 540,685 661,643 688,633 727,612 753,570 776,539 803,493 828,451 853,424 880,405 918,390 943,375 975,374 996,386 1008,405 1035,434 1048,459 1063,478 1090,514 1123,539 1155,549 1197,564 1238,572 1257,573 1280,570 1311,557 1342,539 1365,532 1395,515 1426,502 1468,490 1506,481 1537,482 1583,503 1621,515 1640,527 1663,540'],
  ['#c8c800', 1.5, '13,740 45,747 71,752 103,765 129,772 156,775 201,778 223,768 254,758 290,750 321,742 357,737 402,728 429,720 464,703 495,678 522,663 547,642 562,637 589,636 598,629 670,633 688,631 727,593 751,512 778,440 807,340 828,279 855,257 868,266 880,296 906,348 922,394 945,444 956,468 975,488 996,511 1046,528 1075,549 1125,571 1159,576 1186,579 1234,579 1254,578 1280,567 1300,545 1324,517 1353,488 1384,463 1409,450 1445,467 1460,473 1487,478 1518,500 1548,520 1579,533 1617,550 1638,553 1663,567'],
  ['#d8d8d8', 1.4, '6,738 27,747 45,757 62,760 85,769 112,776 134,783 152,782 179,777 205,768 223,757 241,747 268,738 290,738 312,747 335,740 357,730 379,721 402,717 429,710 446,705 464,690 480,682 495,645 522,630 542,617 562,627 580,635 607,643 625,640 643,628 670,627 688,631 702,604 719,574 728,547 740,482 750,401 761,355 772,313 784,267 792,231 803,211 816,218 829,213 841,237 853,285 866,317 880,367 891,426 908,459 918,486 933,501 956,507 971,511 987,510 1006,524 1025,533 1048,553 1071,572 1098,579 1125,582 1147,576 1186,577 1224,585 1250,577 1265,560 1278,552 1292,530 1303,487 1322,467 1343,447 1368,464 1391,460 1433,453 1449,473 1464,488 1487,508 1510,523 1537,530 1567,540 1598,553 1621,568 1644,572 1663,580'],
];

const barX = i => 6.3 + 12.84 * i;

function drawPrice() {
  const priceY = p => 615 + (7 - p) * 88;
  let s = '';
  for (let p = 5; p <= 12.5; p += 0.5) {
    const y = priceY(p);
    s += `<line x1="0" y1="${y}" x2="1711" y2="${y}" stroke="#a00000" stroke-width="1.4" stroke-dasharray="2 5"/>`;
  }
  candles.forEach((c, i) => {
    const x = barX(i);
    const col = c[4] ? '#f03030' : '#48f8f8';
    s += `<line x1="${x}" y1="${c[2]}" x2="${x}" y2="${c[0]}" stroke="${col}" stroke-width="1.4"/>`;
    s += `<line x1="${x}" y1="${c[1]}" x2="${x}" y2="${c[3]}" stroke="${col}" stroke-width="1.4"/>`;
    if (c[1] - c[0] < 2) {
      s += `<line x1="${x - 5}" y1="${c[0]}" x2="${x + 5}" y2="${c[0]}" stroke="${col}" stroke-width="2"/>`;
    } else if (c[4]) {
      s += `<rect x="${x - 4.4}" y="${c[0]}" width="8.8" height="${c[1] - c[0]}" fill="#000" stroke="${col}" stroke-width="1.6"/>`;
    } else {
      s += `<rect x="${x - 5}" y="${c[0]}" width="10" height="${c[1] - c[0]}" fill="${col}"/>`;
    }
  });
  maLines.forEach(m => {
    s += `<polyline points="${m[2]}" fill="none" stroke="${m[0]}" stroke-width="${m[1]}"/>`;
  });
  // this part of the plot is blanked out in the shot
  s += '<rect x="540" y="643" width="1081" height="183" fill="#000"/>';

  s += '<polyline points="791,97 809,105" fill="none" stroke="#aaa" stroke-width="1.2"/><path d="M791 97l5-2M791 97l3 4" stroke="#aaa" fill="none"/>';
  s += '<text x="813" y="113" class="mark">12.88</text>';
  s += '<line x1="96" y1="795" x2="114" y2="795" stroke="#aaa" stroke-width="1.2"/><path d="M96 795l5-4" stroke="#aaa" fill="none"/>';
  s += '<text x="117" y="803" class="mark">4.96</text>';

  s += '<line x1="1711" y1="68" x2="1711" y2="826" stroke="#a00000" stroke-width="2"/>';
  for (let p = 5; p <= 12.5; p += 0.25) {
    const y = priceY(p);
    const major = Number.isInteger(p * 2);
    s += `<line x1="1711" y1="${y}" x2="${major ? 1720 : 1715}" y2="${y}" stroke="#a00000" stroke-width="1.4"/>`;
    // 5.50 sits under the cursor price tag
    if (major && p !== 5.5) s += `<text x="1778" y="${y + 6.5}" class="axis">${p.toFixed(2)}</text>`;
  }
  document.getElementById('price-chart').innerHTML = s;
}

// indicator bars below, sampled at 3x: screen y = 820 + v / 3
const Y = v => 820 + v / 3;

const topBars = [
  [122,277],[146,305],[170,318],[155,308],[133,290],[150,304],[200,344],[250,389],[177,317],[208,349],
  [213,349],[170,304],[165,295],[187,317],[160,286],[146,277],[123,245],[123,237],[118,182],[118,223],
  [118,218],[120,218],[122,232],[132,241],[120,209],[0,151],[0,178],[0,169],[0,160],[0,133],
  [0,146],[0,137],[0,142],[0,128],[0,115],[0,115],[0,115],[0,0],[0,0],[0,0],
  [0,0],[0,0],[0,0],[0,0],[0,151],[0,0],[0,0],[0,0],[0,0],[0,0],
  [0,0],[0,0],[0,0],[0,0],[0,0],[0,0],[0,0],[0,0],[0,0],[0,137],
  [0,115],[0,0],[0,0],[0,0],[0,133],[146,308],[122,264],[165,308],[245,344],[245,326],
  [156,247],[168,280],[175,301],[164,268],[156,247],[152,235],[149,226],[146,218],[149,226],[146,218],
  [156,247],[149,226],[156,247],[164,268],[149,226],[146,218],[149,226],[149,226],[152,235],[149,226],
  [142,206],[142,206],[120,193],[118,185],[0,164],[0,152],[0,152],[0,144],[0,144],[0,127],
  [0,131],[0,127],[0,115],[0,115],[0,115],[0,115],[0,115],[0,115],[0,115],[0,115],
  [0,115],[0,115],[0,115],[0,135],[0,152],[118,185],[125,206],[168,280],[149,226],[149,226],
  [118,185],[156,247],[152,235],[156,247],[153,239],[156,247],[160,259],[156,247],[159,255],[164,268],
];

const greenBars = [
  [587,440,425],[610,452,422],[622,475,425],[615,460,425],[605,445,430],[610,462,425],[650,502,425],[695,555,425],[633,493,433],[660,520,430],
  [660,520,430],[627,493,443],[622,500,443],[637,500,434],[625,470,452],[623,493,466],[615,485,485],[620,497,497],[623,556,556],[615,507,507],
  [610,515,515],[610,507,507],[587,470,470],[587,475,457],[623,530,530],[637,602,602],[623,556,556],[650,578,578],[641,596,596],[641,618,618],
  [627,596,596],[641,614,614],[664,605,605],[655,637,637],[668,668,668],[690,690,690],[610,610,610],[718,718,718],[712,712,712],[664,664,664],
  [664,664,664],[705,705,705],[682,682,682],[565,565,565],[556,520,520],[578,578,578],[641,641,641],[660,660,660],[682,682,682],[605,605,605],
  [547,547,547],[596,592,592],[664,664,664],[543,543,543],[725,725,725],[687,687,687],[712,712,712],[725,725,725],[725,725,725],[614,587,587],
  [610,610,610],[725,725,725],[605,605,605],[587,587,587],[538,516,516],[660,493,457],[614,470,466],[610,470,448],[673,575,470],[660,565,488],
  [578,466,466],[578,483,483],[578,483,483],[578,474,474],[578,483,483],[578,495,495],[578,483,483],[578,474,474],[578,458,458],[578,460,460],
  [578,466,466],[578,474,474],[578,466,466],[578,474,474],[578,466,466],[578,483,483],[578,474,474],[578,483,483],[590,507,507],[590,495,495],
  [590,516,516],[590,536,536],[590,557,557],[590,578,578],[598,598,598],[607,607,607],[619,619,619],[619,619,619],[632,632,632],[648,648,648],
  [619,619,619],[640,640,640],[660,660,660],[619,619,619],[586,586,586],[569,569,569],[607,607,607],[549,549,549],[549,549,549],[578,578,578],
  [578,578,578],[536,536,536],[516,516,516],[620,495,495],[620,483,483],[620,474,474],[620,487,487],[620,483,483],[620,466,466],[620,454,454],
  [620,490,454],[630,480,445],[630,480,445],[630,470,441],[630,470,441],[630,470,433],[630,470,433],[630,470,437],[630,470,429],[630,470,421],
];

const orangeBars = [
  [735],[730],[730],[730],[735],[730],[730],[728],[740],[730],
  [730],[750],[750],[740],[758],[772],[795],[808],[838,866],[817],
  [825],[817],[781],[767],[838],[875,911],[853,866],[870,888],[885,907],[893,934],
  [880,907],[898,925],[888,916],[915,947],[875,970,983],[835,978,1005],[853,920],[845,938,1020],[835,925,1010],[845,925,970],
  [853,920,965],[870,930,1000],[870,925,983],[800,865,875],[785,830],[822,888],[880,920,947],[898,934,965],[915,956,988],[862,915],
  [813,857],[857,902],[925,950,974],[813,853],[790,965,1005],[800,920,974],[817,866,961],[770,808,866],[803,817,848],[752,808],
  [790,830],[808,925,938],[830,853],[826,848],[772,790],[737,752],[748,758],[740,750],[740,754],[735,745],
  [800,815],[810,825],[820,840],[830,850],[835,860],[840,870],[850,875],[860,885],[850,880],[870,900],
  [880,915],[860,890],[875,905],[880,910],[870,895],[860,880],[875,900],[885,910],[870,900],[880,905],
  [870,895],[850,875],[840,870],[830,860],[820,845],[800,830],[810,850],[820,860],[800,960,985],[790,940,1000],
  [790,960,1005],[800,940,1000],[810,880,900],[800,900,960],[780,860,870],[790,885,925],[790,900,965],[790,960,1010],[760,850,890],[760,835,875],
  [745,800,830],[745,790,810],[740,780,795],[740,770,800],[740,760,780],[740,765,790],[735,755,770],[735,750,765],[735,755,765],[735,750,760],
  [735,748,758],[735,745,755],[735,745,760],[733,742,752],[733,742,750],[733,742,748],[733,740,748],[733,742,750],[733,740,746],[733,738,744],
];

// red / yellow / magenta tops of the volume sticks; entries are bar index first
const volSticks = [
  [17,1345],[18,1320],[19,1345],[20,1345],[21,1345],[24,1345],[25,1312],[26,1335],[27,1330],[28,1325],
  [29,1312],[30,1322],[31,1318],[32,1320],[33,1318],[34,1240,1335],[35,1178,1320],[36,1280,1338],[37,1160,1252,1330],[38,1155,1235,1330],
  [39,1218,1295],[40,1222,1290],[41,1200,1263,1335],[42,1222,1275,1335],[43,1268,1330],[44,1303,1340],[45,1280,1335],[46,1272,1310,1340],[47,1272,1310,1340],[48,1268,1307,1340],
  [49,1290,1320],[50,1300,1335],[51,1298,1325],[52,1295,1320],[53,1307,1335],[54,1105,1275,1320],[55,1145,1268,1320],[56,1140,1185,1285],[57,1078,1118,1178],[58,1115,1130,1215],
  [59,1200,1222,1255],[60,1215,1235,1255],[61,1115,1235,1250],[62,1260,1270,1280],[63,1272,1290,1300],[64,1295,1305,1308],[65,1315,1318,1330],[66,1318,1322,1332],[67,1322,1332,1338],[68,1335,1340],
  [69,1340,1345],[98,1247,1325],[99,1260,1330],[100,1148,1285,1330],[101,1177,1290,1330],[102,1280,1330],[103,1240,1310,1335],[104,1300,1335],[105,1280,1330],[106,1300,1335],
  [107,1290,1335],[108,1290,1335],[109,1300,1340],[110,1310,1340],[111,1320,1340],[112,1320,1345],[113,1330,1345],[114,1338,1348],[115,1342,1348],
];

function drawIndicator() {
  const valY = v => 856 + (400 - v) * 1.0314;
  const base = 725;
  const w = 7.6;
  let s = '';
  s += '<rect x="0" y="856" width="1710" height="102" fill="#062800"/>';
  s += '<rect x="0" y="958" width="1710" height="206" fill="#000033"/>';
  s += '<rect x="0" y="1164" width="1710" height="109" fill="#062800"/>';

  const seg = (i, a, b, col) => {
    if (a === b) return '';
    return `<rect x="${barX(i) - w / 2}" y="${Y(a)}" width="${w}" height="${(b - a) / 3}" fill="${col}"/>`;
  };
  topBars.forEach((b, i) => {
    if (!b[1]) return;
    const top = b[0] ? 107 : 110;
    if (b[0]) s += seg(i, top, b[0], '#0a66f0');
    s += seg(i, b[0] || top, b[1], '#33ffff');
  });
  greenBars.forEach((b, i) => {
    s += seg(i, b[0], base, '#008c00');
    s += seg(i, b[1], b[0], '#30f000');
    s += seg(i, b[2], b[1], '#66f0a0');
  });
  orangeBars.forEach((b, i) => {
    s += seg(i, base, b[0], '#ff6a00');
    if (b[1]) s += seg(i, b[0], b[1], '#ffc030');
    if (b[2]) s += seg(i, b[1], b[2], '#ffff99');
  });
  volSticks.forEach(v => {
    const x = barX(v[0]) - 1;
    const stick = (a, b, col) => `<rect x="${x}" y="${Y(a)}" width="2" height="${(b - a) / 3}" fill="${col}"/>`;
    const tops = v.slice(1);
    const cols = ['#d80000', '#d8d800', '#e000e0'];
    tops.forEach((t, n) => {
      s += stick(t, n + 1 < tops.length ? tops[n + 1] : 1350, cols[n]);
    });
  });

  for (let i = 0; i < 130; i++) {
    s += `<rect x="${barX(i) - 1}" y="957" width="2" height="2" fill="#00a000"/>`;
    s += `<rect x="${barX(i) - 1}" y="1163" width="2" height="2" fill="#c00000"/>`;
    s += `<rect x="${barX(i) - 1}" y="855.5" width="2" height="1" fill="#0040c0"/>`;
  }
  s += '<line x1="6" y1="1061.5" x2="1668" y2="1061.5" stroke="#ffff33" stroke-width="1.8"/>';

  s += '<line x1="1711" y1="855" x2="1711" y2="1281" stroke="#a00000" stroke-width="2"/>';
  for (let v = 50; v <= 400; v += 25) {
    const y = valY(v);
    const major = v % 50 === 0;
    s += `<line x1="1711" y1="${y}" x2="${major ? 1720 : 1715}" y2="${y}" stroke="#a00000" stroke-width="1.4"/>`;
    if (major) s += `<text x="1780" y="${y + 6.5}" class="axis">${v.toFixed(2)}</text>`;
  }
  document.getElementById('ind-chart').innerHTML = s;
}

drawPrice();
drawIndicator();
```
